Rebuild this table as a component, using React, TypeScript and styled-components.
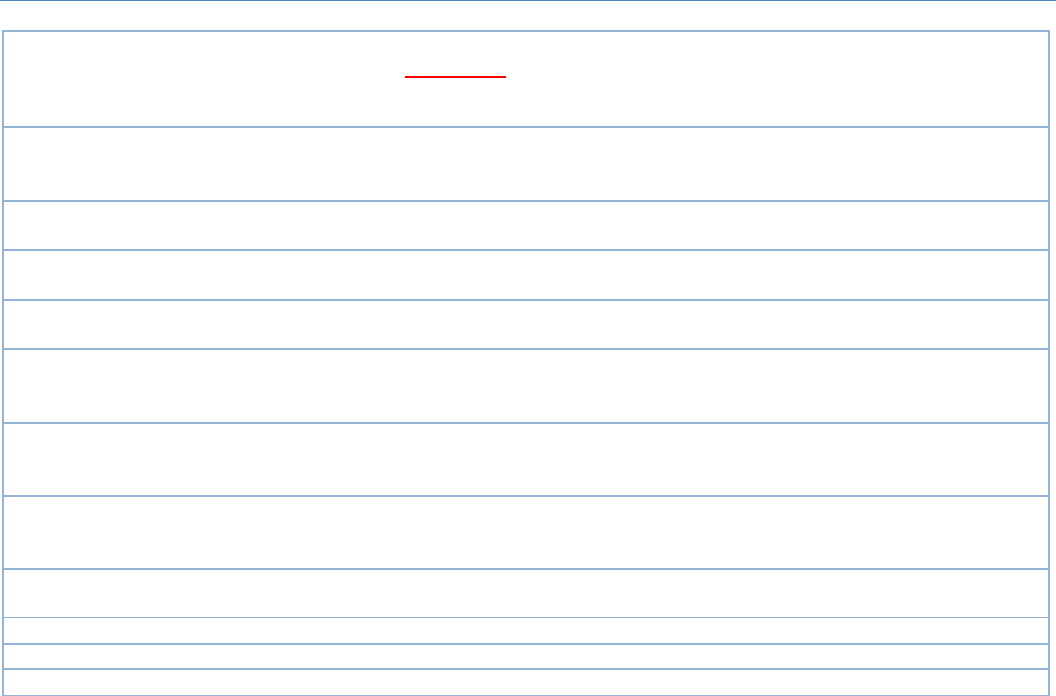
import React from 'react';
import styled, { createGlobalStyle } from 'styled-components';

const GlobalStyle = createGlobalStyle`
  html, body {
    margin: 0;
    padding: 0;
    background: #ffffff;
    font-family: "Liberation Sans", Arial, sans-serif;
  }
`;

const Page = styled.div`
  width: 1056px;
  height: 696px;
  overflow: hidden;
  background: #ffffff;
`;

const TopRule = styled.div`
  height: 1px;
  background: #4f81bd;
`;

const Sheet = styled.div`
  margin: 29px 0 0 2px;
  width: 1048px;
  box-sizing: border-box;
  border: 2px solid #95b3d7;
  border-bottom: none;
  display: flex;
  flex-direction: column;
`;

const Row = styled.div<{ $h: number; $line?: number }>`
  height: ${(p) => p.$h}px;
  border-bottom: ${(p) => p.$line ?? 2}px solid #95b3d7;
  display: flex;
`;

const TitleCell = styled.div`
  flex: 1;
  padding: 44px 0 0 401px;
`;

const TitleUnderline = styled.div`
  width: 101px;
  height: 2px;
  background: #ff0000;
`;

const rows: { h: number; line?: number }[] = [
  { h: 72 },
  { h: 47 },
  { h: 48 },
  { h: 47 },
  { h: 72 },
  { h: 71 },
  { h: 71 },
  { h: 47, line: 1 },
  { h: 25 },
  { h: 23 },
  { h: 25 },
];

export default function App() {
  return (
    <>
      <GlobalStyle />
      <Page>
        <TopRule />
        <Sheet>
          <Row $h={94}>
            <TitleCell>
              <TitleUnderline />
            </TitleCell>
          </Row>
          {rows.map((r, i) => (
            <Row key={i} $h={r.h} $line={r.line} />
          ))}
        </Sheet>
      </Page>
    </>
  );
}
